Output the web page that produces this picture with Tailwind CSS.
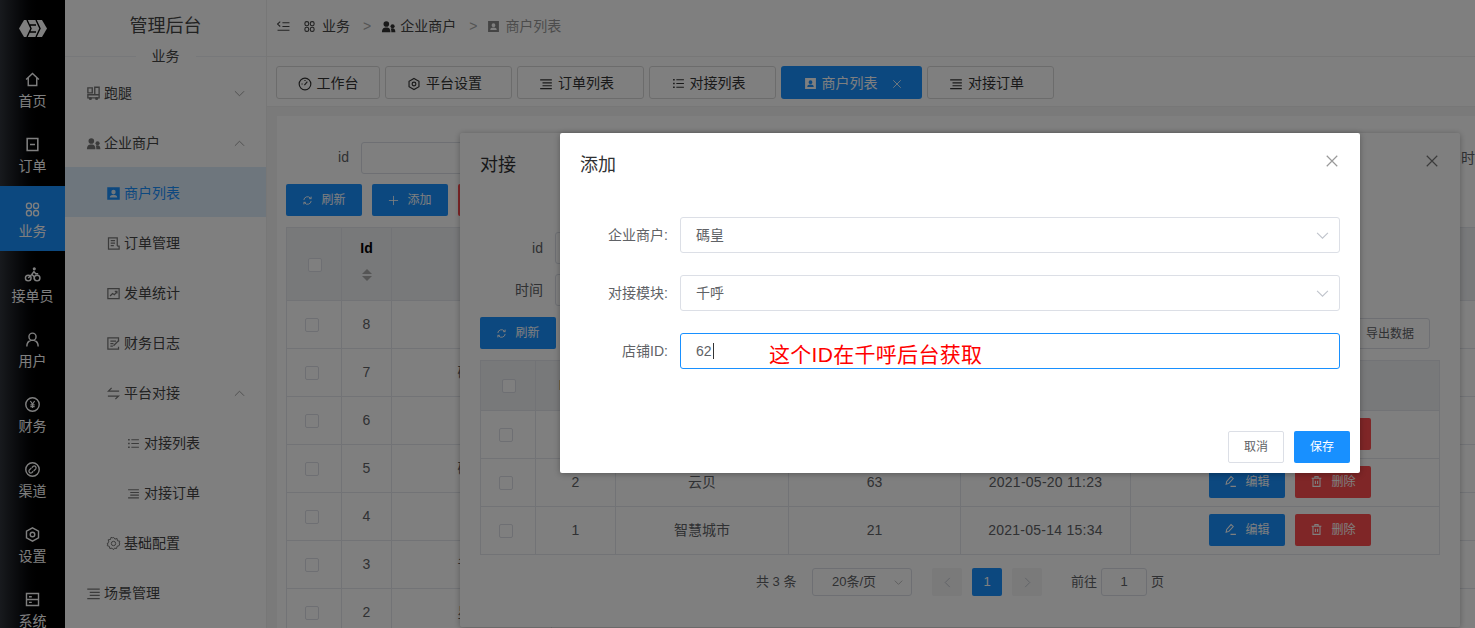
<!DOCTYPE html>
<html lang="zh-CN">
<head>
    <meta charset="UTF-8">
    <meta name="viewport" content="width=device-width, initial-scale=1.0">
    <title>管理后台</title>
    <script src="https://cdn.jsdelivr.net/npm/@tailwindcss/browser@4"></script>
</head>
<body class="relative h-[628px] w-[1475px] overflow-hidden bg-white font-['Liberation_Sans','Noto_Sans_CJK_SC',sans-serif] text-[14px] text-[#333]">

    <!-- icon sprite -->
    <svg class="hidden">
        <symbol id="i-home" viewBox="0 0 24 24"><path d="M3 12 12 3.5 21 12M6 10v10.500h12V10" fill="none" stroke="currentColor" stroke-width="2"/></symbol>
        <symbol id="i-order" viewBox="0 0 24 24"><path d="M4.500 3.500h15v17h-15zM8.500 12h7" fill="none" stroke="currentColor" stroke-width="2.200"/></symbol>
        <symbol id="i-cmd" viewBox="0 0 24 24"><g fill="none" stroke="currentColor" stroke-width="2"><rect x="3.500" y="3" width="7" height="7.500" rx="3.200"/><rect x="13.500" y="3" width="7" height="7.500" rx="3.200"/><rect x="3.500" y="13.500" width="7" height="7.500" rx="3.200"/><rect x="13.500" y="13.500" width="7" height="7.500" rx="3.200"/></g></symbol>
        <symbol id="i-bike" viewBox="0 0 24 24"><circle cx="14.500" cy="4" r="2.200" fill="currentColor"/><g fill="none" stroke="currentColor" stroke-width="2"><circle cx="6" cy="17" r="4"/><circle cx="18.500" cy="17" r="4"/><path d="M6 17l5-5 3.500 3v4M11 12l3-4 2.500 3H20"/></g></symbol>
        <symbol id="i-user" viewBox="0 0 24 24"><path d="M12 3a5 5 0 1 0 0 10 5 5 0 0 0 0-10zM4 22c0-5 2-8 6-9M20 22c0-5-2-8-6-9" fill="none" stroke="currentColor" stroke-width="2"/></symbol>
        <symbol id="i-yen" viewBox="0 0 24 24"><circle cx="12" cy="12" r="9.500" fill="none" stroke="currentColor" stroke-width="2"/><path d="M9 7l3 4.500L15 7M12 11.500V17M9 12.500h6M9 15h6" fill="none" stroke="currentColor" stroke-width="1.600"/></symbol>
        <symbol id="i-link" viewBox="0 0 24 24"><circle cx="12" cy="12" r="9.500" fill="none" stroke="currentColor" stroke-width="2"/><path d="M11 9.500l2-2a2.600 2.600 0 0 1 3.600 3.600l-3 3M13 14.500l-2 2a2.600 2.600 0 0 1-3.600-3.600l3-3" fill="none" stroke="currentColor" stroke-width="1.800"/></symbol>
        <symbol id="i-hex" viewBox="0 0 24 24"><path d="M12 2.500l8.500 4.800v9.400L12 21.500l-8.500-4.800V7.300z" fill="none" stroke="currentColor" stroke-width="2"/><circle cx="12" cy="12" r="3.200" fill="none" stroke="currentColor" stroke-width="2"/></symbol>
        <symbol id="i-sys" viewBox="0 0 24 24"><path d="M3.500 3.500h17v17h-17zM3.500 12h17M7 8h4M7 16h4" fill="none" stroke="currentColor" stroke-width="2"/></symbol>
        <symbol id="i-run" viewBox="0 0 24 24"><path d="M3 3h7v8H3zM14 2h7v12h-7zM3 14h18v5H3z" fill="none" stroke="currentColor" stroke-width="2.200"/><circle cx="7" cy="20" r="2.500" fill="currentColor"/><circle cx="17" cy="20" r="2.500" fill="currentColor"/></symbol>
        <symbol id="i-users" viewBox="0 0 24 24"><circle cx="8.500" cy="8" r="4.500" fill="currentColor"/><path d="M1.500 21c0-5.500 2.500-7.500 7-7.500s6.500 2 6.500 7.500z" fill="currentColor"/><circle cx="18.500" cy="11.500" r="3.300" fill="currentColor"/><path d="M16.500 21c0-3-.3-4.500-1-5.500 1-.6 2-.8 3-.8 3 0 4.500 1.800 4.500 6.300z" fill="currentColor"/></symbol>
        <symbol id="i-card" viewBox="0 0 24 24"><path fill-rule="evenodd" fill="currentColor" d="M2 2h20v20H2zM12 6a3.500 3.500 0 1 0 0 7 3.500 3.500 0 0 0 0-7zM6 18.500h12c0-3-2.500-4.500-6-4.500s-6 1.500-6 4.500z"/></symbol>
        <symbol id="i-doc" viewBox="0 0 24 24"><path d="M18 16V3H4v18h17v-5h-3M7.500 7.500h7M7.500 11.500h7M7.500 15.500h5" fill="none" stroke="currentColor" stroke-width="2"/></symbol>
        <symbol id="i-chart" viewBox="0 0 24 24"><path d="M3 4h18v16H3zM6.500 16l4-4 3 2 4-5M14 8.500h3.500V12" fill="none" stroke="currentColor" stroke-width="2"/></symbol>
        <symbol id="i-log" viewBox="0 0 24 24"><path d="M20 9V3H3v18h17v-4M7 8h9M7 12h5M7 16h4M12 15.500l9-9" fill="none" stroke="currentColor" stroke-width="2"/></symbol>
        <symbol id="i-swap" viewBox="0 0 24 24"><path d="M21 8H4l5-5M3 16h17l-5 5" fill="none" stroke="currentColor" stroke-width="2"/></symbol>
        <symbol id="i-list" viewBox="0 0 24 24"><path d="M8 5h14M8 12h14M8 19h14" fill="none" stroke="currentColor" stroke-width="2"/><path d="M2 3.500h3v3H2zM2 10.500h3v3H2zM2 17.500h3v3H2z" fill="currentColor"/></symbol>
        <symbol id="i-lines" viewBox="0 0 24 24"><path d="M2 5h20M6 10h16M6 15h16M2 20h20" fill="none" stroke="currentColor" stroke-width="2"/></symbol>
        <symbol id="i-gear" viewBox="0 0 24 24"><path d="M12 2l2.200 3 3.500-1 .6 3.700 3.700.6-1 3.500 1 .2-1 3.500-3.300 1-.8 3.500-3.500-.6L12 22l-2.400-2.600-3.500.6-.8-3.500-3.300-1 1.200-3.500L2 12l2.500-2.500-1-3.500 3.700-.4.800-3.500 3 1z" fill="none" stroke="currentColor" stroke-width="1.600"/><circle cx="12" cy="12" r="3.500" fill="none" stroke="currentColor" stroke-width="1.600"/></symbol>
        <symbol id="i-gauge" viewBox="0 0 24 24"><circle cx="12" cy="12" r="10" fill="none" stroke="currentColor" stroke-width="2"/><path d="M11 14l5-6M6 12h2M12 5v2" fill="none" stroke="currentColor" stroke-width="2"/></symbol>
        <symbol id="i-refresh" viewBox="0 0 24 24"><path d="M4 11a8 8 0 0 1 14-4.500L20 8M20 13a8 8 0 0 1-14 4.500L4 16M20 3.500V8h-4.500M4 20.500V16h4.500" fill="none" stroke="currentColor" stroke-width="2"/></symbol>
        <symbol id="i-plus" viewBox="0 0 24 24"><path d="M12 2v20M2 12h20" fill="none" stroke="currentColor" stroke-width="1.800"/></symbol>
        <symbol id="i-pen" viewBox="0 0 24 24"><path d="M4 17l1-5 8-9 4 3.500-8 9zM12 21h10" fill="none" stroke="currentColor" stroke-width="2"/></symbol>
        <symbol id="i-trash" viewBox="0 0 24 24"><path d="M3 6h18M9 6V3h6v3M5.500 6v15h13V6M10 10.500v6M14 10.500v6" fill="none" stroke="currentColor" stroke-width="2"/></symbol>
        <symbol id="i-close" viewBox="0 0 24 24"><path d="M3 3l18 18M21 3L3 21" fill="none" stroke="currentColor" stroke-width="2"/></symbol>
        <symbol id="i-down" viewBox="0 0 24 24"><path d="M2 7l10 10L22 7" fill="none" stroke="currentColor" stroke-width="2"/></symbol>
        <symbol id="i-up" viewBox="0 0 24 24"><path d="M2 17L12 7l10 10" fill="none" stroke="currentColor" stroke-width="2"/></symbol>
        <symbol id="i-fold" viewBox="0 0 24 24"><path d="M10 5h13M10 12h13M1 19h22M6 3L1 7.500 6 12" fill="none" stroke="currentColor" stroke-width="2"/></symbol>
    </svg>

    <div class="flex h-full">
        <!-- icon rail -->
        <nav class="w-[65px] shrink-0 bg-linear-to-r from-[#30343c] to-black to-70% text-white">
            <div class="flex h-[56px] items-center justify-center">
                <svg class="h-[17px] w-[28px]" viewBox="0 0 28 17"><path fill="#fff" d="M0 8.500 5 0h18l5 8.500L23 17H5z"/><path d="M8 0l4 8.500L8 17M17 0l4 8.500L17 17M11 5h6M11 12h6" fill="none" stroke="#000" stroke-width="1.400"/></svg>
            </div>
            <div class="flex h-[65px] flex-col items-center pt-[15px]"><svg class="h-[17px] w-[17px]"><use href="#i-home"/></svg><span class="mt-[3px] leading-[20px]">首页</span></div>
            <div class="flex h-[65px] flex-col items-center pt-[15px]"><svg class="h-[17px] w-[17px]"><use href="#i-order"/></svg><span class="mt-[3px] leading-[20px]">订单</span></div>
            <div class="flex h-[65px] flex-col items-center bg-[#1890ff] pt-[15px]"><svg class="h-[17px] w-[17px]"><use href="#i-cmd"/></svg><span class="mt-[3px] leading-[20px]">业务</span></div>
            <div class="flex h-[65px] flex-col items-center pt-[15px]"><svg class="h-[17px] w-[17px]"><use href="#i-bike"/></svg><span class="mt-[3px] leading-[20px]">接单员</span></div>
            <div class="flex h-[65px] flex-col items-center pt-[15px]"><svg class="h-[17px] w-[17px]"><use href="#i-user"/></svg><span class="mt-[3px] leading-[20px]">用户</span></div>
            <div class="flex h-[65px] flex-col items-center pt-[15px]"><svg class="h-[17px] w-[17px]"><use href="#i-yen"/></svg><span class="mt-[3px] leading-[20px]">财务</span></div>
            <div class="flex h-[65px] flex-col items-center pt-[15px]"><svg class="h-[17px] w-[17px]"><use href="#i-link"/></svg><span class="mt-[3px] leading-[20px]">渠道</span></div>
            <div class="flex h-[65px] flex-col items-center pt-[15px]"><svg class="h-[17px] w-[17px]"><use href="#i-hex"/></svg><span class="mt-[3px] leading-[20px]">设置</span></div>
            <div class="flex h-[65px] flex-col items-center pt-[15px]"><svg class="h-[17px] w-[17px]"><use href="#i-sys"/></svg><span class="mt-[3px] leading-[20px]">系统</span></div>
        </nav>

        <!-- menu -->
        <aside class="w-[202px] shrink-0 border-r border-[#eee] bg-white text-[#444]">
            <div class="h-[46px] pt-[14px] text-center text-[18px] leading-[24px]">管理后台</div>
            <div class="relative h-[21px]">
                <div class="absolute top-[10px] right-0 left-0 border-t border-[#eef0f4]"></div>
                <div class="relative mx-auto w-[60px] bg-white text-center leading-[20px]">业务</div>
            </div>
            <div class="flex h-[50px] items-center pt-[2px] pr-[21px] pl-[21px]"><svg class="mr-[3px] h-[15px] w-[15px] text-[#777]"><use href="#i-run"/></svg>跑腿<svg class="ml-auto h-[11px] w-[11px] text-[#999]"><use href="#i-down"/></svg></div>
            <div class="flex h-[50px] items-center pt-[2px] pr-[21px] pl-[21px]"><svg class="mr-[3px] h-[15px] w-[15px] text-[#777]"><use href="#i-users"/></svg>企业商户<svg class="ml-auto h-[11px] w-[11px] text-[#999]"><use href="#i-up"/></svg></div>
            <div class="flex h-[50px] items-center bg-[#dcecfb] pt-[2px] pl-[41px] text-[#1890ff]"><svg class="mr-[3px] h-[15px] w-[15px]"><use href="#i-card"/></svg>商户列表</div>
            <div class="flex h-[50px] items-center pt-[2px] pl-[41px]"><svg class="mr-[3px] h-[15px] w-[15px] text-[#777]"><use href="#i-doc"/></svg>订单管理</div>
            <div class="flex h-[50px] items-center pt-[2px] pl-[41px]"><svg class="mr-[3px] h-[15px] w-[15px] text-[#777]"><use href="#i-chart"/></svg>发单统计</div>
            <div class="flex h-[50px] items-center pt-[2px] pl-[41px]"><svg class="mr-[3px] h-[15px] w-[15px] text-[#777]"><use href="#i-log"/></svg>财务日志</div>
            <div class="flex h-[50px] items-center pt-[2px] pr-[21px] pl-[41px]"><svg class="mr-[3px] h-[15px] w-[15px] text-[#777]"><use href="#i-swap"/></svg>平台对接<svg class="ml-auto h-[11px] w-[11px] text-[#999]"><use href="#i-up"/></svg></div>
            <div class="flex h-[50px] items-center pt-[2px] pl-[62px]"><svg class="mr-[4px] h-[13px] w-[13px] text-[#777]"><use href="#i-list"/></svg>对接列表</div>
            <div class="flex h-[50px] items-center pt-[2px] pl-[62px]"><svg class="mr-[4px] h-[13px] w-[13px] text-[#777]"><use href="#i-lines"/></svg>对接订单</div>
            <div class="flex h-[50px] items-center pt-[2px] pl-[41px]"><svg class="mr-[3px] h-[15px] w-[15px] text-[#777]"><use href="#i-gear"/></svg>基础配置</div>
            <div class="flex h-[50px] items-center pt-[2px] pl-[21px]"><svg class="mr-[3px] h-[15px] w-[15px] text-[#777]"><use href="#i-lines"/></svg>场景管理</div>
        </aside>

        <!-- main -->
        <main class="flex min-w-0 flex-1 flex-col bg-[#f4f4f4]">
            <div class="flex h-[57px] shrink-0 items-center border-b border-[#eee] bg-white pb-[3px] pl-[10px]">
                <svg class="h-[13px] w-[13px] text-[#444]"><use href="#i-fold"/></svg>
                <svg class="ml-[13px] h-[13px] w-[13px] text-[#444]"><use href="#i-cmd"/></svg><span class="ml-[6px] text-[#444]">业务</span>
                <span class="mr-[10px] ml-[13px] text-[#aaa]">&gt;</span>
                <svg class="h-[15px] w-[15px] text-[#333]"><use href="#i-users"/></svg><span class="ml-1 text-[#444]">企业商户</span>
                <span class="mr-[10px] ml-[13px] text-[#aaa]">&gt;</span>
                <svg class="h-[13px] w-[13px] text-[#888]"><use href="#i-card"/></svg><span class="ml-[5px] text-[#999]">商户列表</span>
            </div>
            <div class="flex h-[50px] shrink-0 items-start gap-[5px] border-b border-[#eee] bg-white pt-[9px] pl-[9px]">
                <div class="flex h-[33px] w-[104px] items-center justify-center gap-[5px] rounded-[3px] border border-[#d9d9d9] pt-[2px]"><svg class="h-[14px] w-[14px]"><use href="#i-gauge"/></svg>工作台</div>
                <div class="flex h-[33px] w-[127px] items-center justify-center gap-[5px] rounded-[3px] border border-[#d9d9d9] pt-[2px] pr-[8px]"><svg class="h-[14px] w-[14px]"><use href="#i-hex"/></svg>平台设置</div>
                <div class="flex h-[33px] w-[127px] items-center justify-center gap-[5px] rounded-[3px] border border-[#d9d9d9] pt-[2px] pr-[8px]"><svg class="h-[14px] w-[14px]"><use href="#i-lines"/></svg>订单列表</div>
                <div class="flex h-[33px] w-[127px] items-center justify-center gap-[5px] rounded-[3px] border border-[#d9d9d9] pt-[2px] pr-[8px]"><svg class="h-[13px] w-[13px]"><use href="#i-list"/></svg>对接列表</div>
                <div class="flex h-[33px] w-[141px] items-center justify-center gap-[5px] rounded-[3px] bg-[#1890ff] pt-[2px] pl-[2px] text-white"><svg class="h-[13px] w-[13px]"><use href="#i-card"/></svg>商户列表<svg class="ml-[9px] h-[10px] w-[10px]"><use href="#i-close"/></svg></div>
                <div class="flex h-[33px] w-[127px] items-center justify-center gap-[5px] rounded-[3px] border border-[#d9d9d9] pt-[2px] pr-[8px]"><svg class="h-[14px] w-[14px]"><use href="#i-lines"/></svg>对接订单</div>
            </div>

            <!-- merchant list behind the dialogs -->
            <section class="mt-[9px] ml-[10px] min-h-0 flex-1 overflow-hidden bg-white pt-[26px] pl-[9px]">
                <div class="flex h-[32px] items-center">
                    <label class="w-[63px] shrink-0 pb-[2px] text-right text-[#606266]">id</label>
                    <div class="ml-[12px] h-[32px] w-[200px] shrink-0 rounded-[3px] border border-[#dcdfe6]"></div>
                    <label class="ml-[900px] shrink-0 whitespace-nowrap text-[#606266]">时间</label>
                </div>
                <div class="mt-[10px] flex gap-[10px] text-[12px] text-white">
                    <div class="flex h-[32px] w-[76px] items-center justify-center gap-[8px] rounded-[2px] bg-[#1890ff]"><svg class="h-[11px] w-[11px]"><use href="#i-refresh"/></svg>刷新</div>
                    <div class="flex h-[32px] w-[76px] items-center justify-center gap-[8px] rounded-[2px] bg-[#1890ff]"><svg class="h-[11px] w-[11px]"><use href="#i-plus"/></svg>添加</div>
                    <div class="h-[32px] w-[76px] rounded-[2px] bg-[#ff4d4f]"></div>
                </div>
                <table class="mt-[11px] w-[1300px] table-fixed border-collapse text-center text-[#606266]">
                    <thead>
                        <tr class="h-[73px] bg-[#f0f2f5]">
                            <th class="w-[55px] border border-[#e4e7ed]"><span class="ml-[1px] inline-block h-[14px] w-[14px] rounded-[2px] border border-[#dcdfe6] bg-white align-middle"></span></th>
                            <th class="w-[50px] border border-[#e4e7ed] pb-[10px] text-black"><div class="mb-[10px]">Id</div><div class="mx-auto flex w-[10px] flex-col gap-[2px]"><span class="h-0 w-0 border-x-[5px] border-b-[5px] border-x-transparent border-b-[#aaa]"></span><span class="h-0 w-0 border-x-[5px] border-t-[5px] border-x-transparent border-t-[#aaa]"></span></div></th>
                            <th class="w-[160px] border border-[#e4e7ed]"></th>
                            <th class="border border-[#e4e7ed]"></th>
                        </tr>
                    </thead>
                    <tbody>
                        <tr class="h-[48px]"><td class="border border-[#e4e7ed]"><span class="mr-[4px] inline-block h-[14px] w-[14px] rounded-[2px] border border-[#dcdfe6] align-middle"></span></td><td class="border border-[#e4e7ed]">8</td><td class="border border-[#e4e7ed]"></td><td class="border border-[#e4e7ed]"></td></tr>
                        <tr class="h-[48px]"><td class="border border-[#e4e7ed]"><span class="mr-[4px] inline-block h-[14px] w-[14px] rounded-[2px] border border-[#dcdfe6] align-middle"></span></td><td class="border border-[#e4e7ed]">7</td><td class="border border-[#e4e7ed]">碼皇</td><td class="border border-[#e4e7ed]"></td></tr>
                        <tr class="h-[48px]"><td class="border border-[#e4e7ed]"><span class="mr-[4px] inline-block h-[14px] w-[14px] rounded-[2px] border border-[#dcdfe6] align-middle"></span></td><td class="border border-[#e4e7ed]">6</td><td class="border border-[#e4e7ed]"></td><td class="border border-[#e4e7ed]"></td></tr>
                        <tr class="h-[48px]"><td class="border border-[#e4e7ed]"><span class="mr-[4px] inline-block h-[14px] w-[14px] rounded-[2px] border border-[#dcdfe6] align-middle"></span></td><td class="border border-[#e4e7ed]">5</td><td class="border border-[#e4e7ed]">碼皇</td><td class="border border-[#e4e7ed]"></td></tr>
                        <tr class="h-[48px]"><td class="border border-[#e4e7ed]"><span class="mr-[4px] inline-block h-[14px] w-[14px] rounded-[2px] border border-[#dcdfe6] align-middle"></span></td><td class="border border-[#e4e7ed]">4</td><td class="border border-[#e4e7ed]"></td><td class="border border-[#e4e7ed]"></td></tr>
                        <tr class="h-[48px]"><td class="border border-[#e4e7ed]"><span class="mr-[4px] inline-block h-[14px] w-[14px] rounded-[2px] border border-[#dcdfe6] align-middle"></span></td><td class="border border-[#e4e7ed]">3</td><td class="border border-[#e4e7ed]">千呼</td><td class="border border-[#e4e7ed]"></td></tr>
                        <tr class="h-[48px]"><td class="border border-[#e4e7ed]"><span class="mr-[4px] inline-block h-[14px] w-[14px] rounded-[2px] border border-[#dcdfe6] align-middle"></span></td><td class="border border-[#e4e7ed]">2</td><td class="border border-[#e4e7ed]">星链</td><td class="border border-[#e4e7ed]"></td></tr>
                    </tbody>
                </table>
            </section>
        </main>
    </div>

    <!-- 对接 dialog -->
    <div class="absolute top-[133px] left-[460px] h-[494px] w-[1000px] rounded-[2px] bg-white px-[20px] text-[#606266] shadow-[0_1px_6px_rgba(0,0,0,0.3)]">
        <div class="flex h-[64px] items-center text-[18px] text-[#303133]">对接<svg class="absolute top-[21px] right-[21px] h-[14px] w-[14px] text-[#777]"><use href="#i-close"/></svg></div>
        <div class="mt-[35px] flex h-[32px] items-center"><label class="w-[63px] text-right">id</label><div class="ml-[12px] h-[32px] w-[200px] rounded-[3px] border border-[#dcdfe6]"></div></div>
        <div class="mt-[10px] flex h-[32px] items-center"><label class="w-[63px] text-right">时间</label><div class="ml-[12px] h-[32px] w-[200px] rounded-[3px] border border-[#dcdfe6]"></div></div>
        <div class="mt-[11px] flex h-[32px] justify-between pr-[10px] text-[12px]">
            <div class="flex w-[76px] items-center justify-center gap-[8px] rounded-[2px] bg-[#1890ff] text-white"><svg class="h-[11px] w-[11px]"><use href="#i-refresh"/></svg>刷新</div>
            <div class="mt-[1px] flex w-[80px] items-center justify-center rounded-[3px] border border-[#dcdfe6]">导出数据</div>
        </div>
        <table class="mt-[11px] w-[960px] table-fixed border-collapse text-center">
            <thead>
                <tr class="h-[50px] bg-[#f0f2f5]">
                    <th class="w-[55px] border border-[#e4e7ed]"><span class="ml-[1px] inline-block h-[14px] w-[14px] rounded-[2px] border border-[#dcdfe6] bg-white align-middle"></span></th>
                    <th class="w-[80px] border border-[#e4e7ed] pl-[23px] text-left text-black">Id</th>
                    <th class="w-[173px] border border-[#e4e7ed]"></th>
                    <th class="w-[172px] border border-[#e4e7ed]"></th>
                    <th class="w-[170px] border border-[#e4e7ed]"></th>
                    <th class="border border-[#e4e7ed]"></th>
                </tr>
            </thead>
            <tbody>
                <tr class="h-[48px]">
                    <td class="border border-[#e4e7ed]"><span class="mr-[5px] inline-block h-[14px] w-[14px] rounded-[2px] border border-[#dcdfe6] align-middle"></span></td>
                    <td class="border border-[#e4e7ed]">3</td><td class="border border-[#e4e7ed]">碼皇</td><td class="border border-[#e4e7ed]">62</td><td class="border border-[#e4e7ed] tracking-[0.25px]">2021-05-21 10:08</td>
                    <td class="border border-[#e4e7ed]"><div class="mb-[2px] flex justify-center gap-[10px] pl-[10px] text-[12px] text-white"><span class="flex h-[32px] w-[76px] items-center justify-center gap-[8px] rounded-[2px] bg-[#1890ff]"><svg class="h-[13px] w-[13px]"><use href="#i-pen"/></svg>编辑</span><span class="flex h-[32px] w-[76px] items-center justify-center gap-[8px] rounded-[2px] bg-[#ff4d4f]"><svg class="h-[13px] w-[13px]"><use href="#i-trash"/></svg>删除</span></div></td>
                </tr>
                <tr class="h-[48px]">
                    <td class="border border-[#e4e7ed]"><span class="mr-[5px] inline-block h-[14px] w-[14px] rounded-[2px] border border-[#dcdfe6] align-middle"></span></td>
                    <td class="border border-[#e4e7ed]">2</td><td class="border border-[#e4e7ed]">云贝</td><td class="border border-[#e4e7ed]">63</td><td class="border border-[#e4e7ed] tracking-[0.25px]">2021-05-20 11:23</td>
                    <td class="border border-[#e4e7ed]"><div class="mb-[2px] flex justify-center gap-[10px] pl-[10px] text-[12px] text-white"><span class="flex h-[32px] w-[76px] items-center justify-center gap-[8px] rounded-[2px] bg-[#1890ff]"><svg class="h-[13px] w-[13px]"><use href="#i-pen"/></svg>编辑</span><span class="flex h-[32px] w-[76px] items-center justify-center gap-[8px] rounded-[2px] bg-[#ff4d4f]"><svg class="h-[13px] w-[13px]"><use href="#i-trash"/></svg>删除</span></div></td>
                </tr>
                <tr class="h-[48px]">
                    <td class="border border-[#e4e7ed]"><span class="mr-[5px] inline-block h-[14px] w-[14px] rounded-[2px] border border-[#dcdfe6] align-middle"></span></td>
                    <td class="border border-[#e4e7ed]">1</td><td class="border border-[#e4e7ed]">智慧城市</td><td class="border border-[#e4e7ed]">21</td><td class="border border-[#e4e7ed] tracking-[0.25px]">2021-05-14 15:34</td>
                    <td class="border border-[#e4e7ed]"><div class="mb-[2px] flex justify-center gap-[10px] pl-[10px] text-[12px] text-white"><span class="flex h-[32px] w-[76px] items-center justify-center gap-[8px] rounded-[2px] bg-[#1890ff]"><svg class="h-[13px] w-[13px]"><use href="#i-pen"/></svg>编辑</span><span class="flex h-[32px] w-[76px] items-center justify-center gap-[8px] rounded-[2px] bg-[#ff4d4f]"><svg class="h-[13px] w-[13px]"><use href="#i-trash"/></svg>删除</span></div></td>
                </tr>
            </tbody>
        </table>
        <div class="mt-[13px] flex h-[28px] items-center pl-[276px] text-[13px]">
            <span class="w-[56px]">共 3 条</span>
            <div class="relative flex h-[28px] w-[100px] items-center rounded-[3px] border border-[#dcdfe6] pl-[19px]">20条/页<svg class="absolute top-[9px] right-[8px] h-[9px] w-[9px] text-[#aaa]"><use href="#i-down"/></svg></div>
            <div class="ml-[20px] flex h-[28px] w-[30px] items-center justify-center rounded-[2px] bg-[#f4f4f5] text-[#c0c4cc]"><svg class="h-[11px] w-[11px] rotate-90"><use href="#i-down"/></svg></div>
            <div class="ml-[10px] flex h-[28px] w-[30px] items-center justify-center rounded-[2px] bg-[#1890ff] text-white">1</div>
            <div class="ml-[10px] flex h-[28px] w-[30px] items-center justify-center rounded-[2px] bg-[#f4f4f5] text-[#c0c4cc]"><svg class="h-[11px] w-[11px] -rotate-90"><use href="#i-down"/></svg></div>
            <span class="ml-[29px]">前往</span>
            <div class="ml-[4px] flex h-[28px] w-[46px] items-center justify-center rounded-[3px] border border-[#dcdfe6]">1</div>
            <span class="ml-[4px]">页</span>
        </div>
    </div>

    <!-- mask -->
    <div class="absolute inset-0 bg-black/50"></div>

    <!-- 添加 dialog -->
    <div class="absolute top-[133px] left-[560px] h-[340px] w-[800px] rounded-[2px] bg-white shadow-[0_1px_6px_rgba(0,0,0,0.3)]">
        <div class="flex h-[64px] items-center pl-[20px] text-[18px] text-[#303133]">添加<svg class="absolute top-[21px] right-[21px] h-[14px] w-[14px] text-[#999]"><use href="#i-close"/></svg></div>
        <div class="mt-[20px] flex flex-col gap-[22px] pr-[20px] text-[#606266]">
            <div class="flex items-center">
                <label class="w-[108px] text-right">企业商户:</label>
                <div class="ml-[12px] flex h-[36px] flex-1 items-center justify-between rounded-[3px] border border-[#dcdfe6] pr-[10px] pl-[15px]">碼皇<svg class="h-[13px] w-[13px] text-[#c0c4cc]"><use href="#i-down"/></svg></div>
            </div>
            <div class="flex items-center">
                <label class="w-[108px] text-right">对接模块:</label>
                <div class="ml-[12px] flex h-[36px] flex-1 items-center justify-between rounded-[3px] border border-[#dcdfe6] pr-[10px] pl-[15px]">千呼<svg class="h-[13px] w-[13px] text-[#c0c4cc]"><use href="#i-down"/></svg></div>
            </div>
            <div class="flex items-center">
                <label class="w-[108px] text-right">店铺ID:</label>
                <div class="relative ml-[12px] flex h-[36px] flex-1 items-center rounded-[3px] border border-[#1890ff] pl-[15px]">62<span class="ml-[1px] h-[16px] w-px bg-[#333]"></span>
                    <span class="absolute top-[6px] left-[88px] whitespace-nowrap text-[21px] leading-[30px] tracking-[0.3px] text-[#ff0000]">这个ID在千呼后台获取</span>
                </div>
            </div>
        </div>
        <div class="absolute right-[10px] bottom-[10px] flex gap-[10px] text-[12px]">
            <div class="flex h-[32px] w-[56px] items-center justify-center rounded-[2px] border border-[#dcdfe6] text-[#606266]">取消</div>
            <div class="flex h-[32px] w-[56px] items-center justify-center rounded-[2px] bg-[#1890ff] text-white">保存</div>
        </div>
    </div>
</body>
</html>
